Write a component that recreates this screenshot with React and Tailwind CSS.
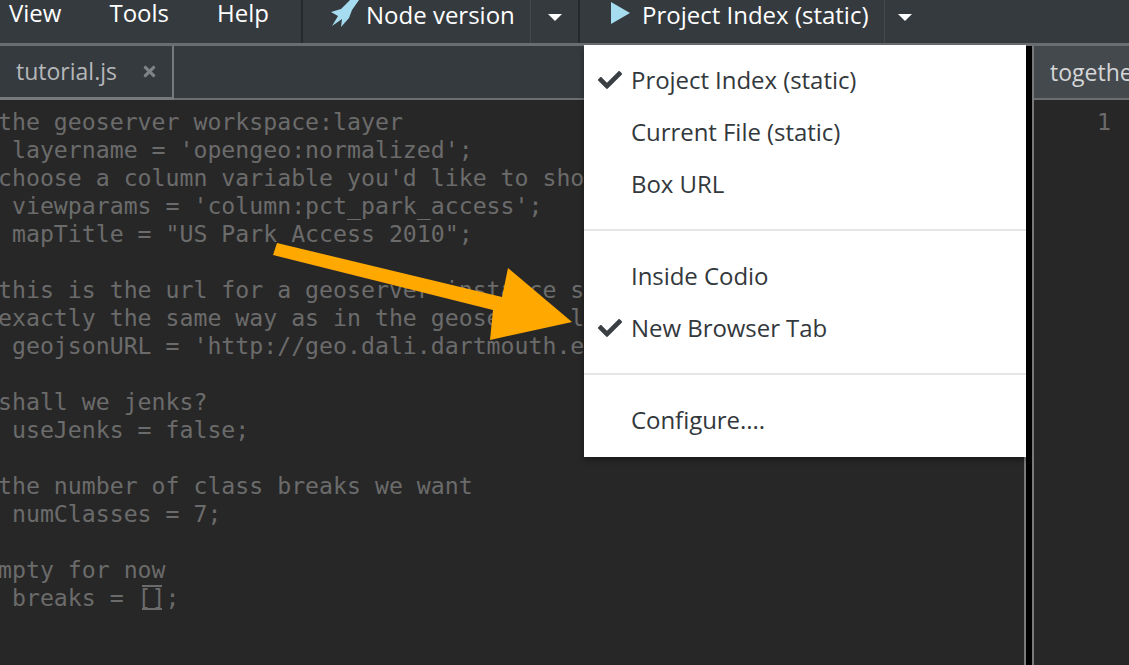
import { FaCheck, FaTimes } from "react-icons/fa";

const MONO = { fontFamily: '"DejaVu Sans Mono", monospace' };

const CODE = [
  "the geoserver workspace:layer",
  " layername = 'opengeo:normalized';",
  "choose a column variable you'd like to show",
  " viewparams = 'column:pct_park_access';",
  " mapTitle = \"US Park Access 2010\";",
  "",
  "this is the url for a geoserver instance s",
  "exactly the same way as in the geoserver l",
  " geojsonURL = 'http://geo.dali.dartmouth.e",
  "",
  "shall we jenks?",
  " useJenks = false;",
  "",
  "the number of class breaks we want",
  " numClasses = 7;",
  "",
  "mpty for now",
];

const MENU = [
  {
    cls: "pt-[9px] pb-[19px]",
    items: [
      { label: "Project Index (static)", checked: true },
      { label: "Current File (static)" },
      { label: "Box URL" },
    ],
  },
  {
    cls: "border-t-2 border-[#e6e6e6] pt-[19px] pb-[19px]",
    items: [{ label: "Inside Codio" }, { label: "New Browser Tab", checked: true }],
  },
  {
    cls: "border-t-2 border-[#e6e6e6] pt-[19px] pb-[11px]",
    items: [{ label: "Configure...." }],
  },
];

function Caret() {
  return <span className="w-0 h-0 border-x-[7px] border-x-transparent border-t-[7px] border-t-white" />;
}

function Rocket() {
  return (
    <svg width="30" height="28" viewBox="0 0 30 28" className="shrink-0 -mt-[3px]">
      <path d="M29 0 L20 0 L11 9 L1 12 L8 16 L2 26 L12 19 L11 27 L19 18 L22 10 Z" fill="#a5dcf0" />
    </svg>
  );
}

function DropMenu() {
  return (
    <div className="absolute left-[584px] top-[45px] w-[442px] bg-white text-[#33383c] shadow-[0_3px_6px_rgba(0,0,0,0.35)]">
      {MENU.map((group, i) => (
        <div key={i} className={group.cls}>
          {group.items.map((item) => (
            <div key={item.label} className="h-[52px] flex items-center pl-[14px]">
              <span className="w-[33px] text-[#3a3f44]">{item.checked && <FaCheck size={24} />}</span>
              <span className="text-[24px] tracking-[-0.05px]">{item.label}</span>
            </div>
          ))}
        </div>
      ))}
    </div>
  );
}

function Arrow() {
  return (
    <svg className="absolute left-0 top-0 pointer-events-none" width="1129" height="665">
      <polygon points="277,243 502,297 508,268 572,322 490,340 493,310 273,255" fill="#ffa900" />
    </svg>
  );
}

export default function App() {
  return (
    <div
      className="relative w-[1129px] h-[665px] overflow-hidden bg-[#272727] flex flex-col"
      style={{ fontFamily: '"Open Sans", "Noto Sans", sans-serif' }}
    >
      {/* menu bar */}
      <div className="h-[46px] shrink-0 bg-[#353a3f] border-b-[3px] border-[#6b6e71] flex text-white text-[24px]">
        <div className="w-[303px] flex items-center gap-[48px] pl-[9px] pb-[17px] border-r-2 border-[#26292c]">
          <span>View</span>
          <span>Tools</span>
          <span>Help</span>
        </div>
        <div className="w-[228px] flex items-center pl-[27px] pb-[13px] gap-[6px] border-r border-[#44494e]">
          <Rocket />
          <span>Node version</span>
        </div>
        <div className="w-[49px] flex items-center justify-center pb-[9px] border-r-2 border-[#26292c]">
          <Caret />
        </div>
        <div className="w-[305px] flex items-center pl-[31px] pb-[13px] gap-[12px] border-r border-[#44494e]">
          <span className="w-0 h-0 -mt-1 border-y-[11px] border-y-transparent border-l-[19px] border-l-[#a5dcf0]" />
          <span>Project Index (static)</span>
        </div>
        <div className="w-[40px] flex items-center justify-center pb-[9px]">
          <Caret />
        </div>
      </div>

      <div className="flex-1 flex min-h-0">
        {/* left pane */}
        <div className="w-[1026px] shrink-0 flex flex-col border-r-2 border-[#77797b]">
          <div className="h-[54px] shrink-0 flex bg-[#353a3f] border-b-2 border-[#6b6e71]">
            <div className="w-[174px] h-[54px] flex items-center justify-between pl-[16px] pr-[14px] border-r-2 border-b-[3px] border-[#77797b] text-[#b5b7b9] text-[23px]">
              <span>tutorial.js</span>
              <FaTimes size={17} className="text-[#7f8385]" />
            </div>
          </div>
          <div className="flex-1 pt-2 -ml-0.5 text-[23.2px] text-[#6b6b6b] whitespace-pre overflow-hidden" style={MONO}>
            {CODE.map((line, i) => (
              <div key={i} className="h-[28px] leading-[28px]">{line}</div>
            ))}
            <div className="h-[28px] leading-[28px]">
              {" breaks = "}
              <span className="relative">
                []
                <span className="absolute left-[4px] right-[4px] top-[1px] bottom-[1px] border-y-2 border-[#6b6b6b]" />
              </span>
              ;
            </div>
          </div>
        </div>

        <div className="w-[6px] shrink-0 bg-black" />

        {/* right pane */}
        <div className="flex-1 min-w-0 flex flex-col border-l-2 border-[#77797b]">
          <div className="h-[54px] shrink-0 bg-[#44494e] border-b-2 border-[#6b6e71] flex items-center pl-[16px] text-[23px] text-[#d5d6d7] overflow-hidden">
            together
          </div>
          <div className="pt-2 pl-[63px] text-[23.2px] leading-[28px] text-[#6b6b6b]" style={MONO}>
            1
          </div>
        </div>
      </div>

      <Arrow />
      <DropMenu />
    </div>
  );
}
